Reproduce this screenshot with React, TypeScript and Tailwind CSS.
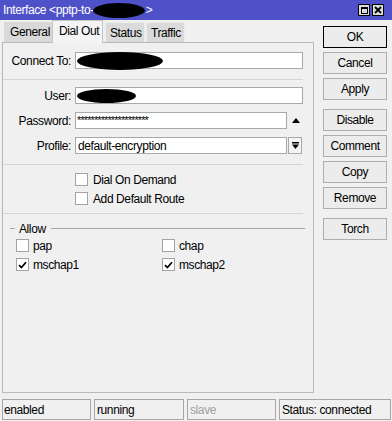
import React from "react";

function Checkbox({ checked }: { checked?: boolean }) {
  return (
    <span className="w-[13px] h-[13px] bg-white border border-[#a3a3a3] flex items-center justify-center shrink-0">
      {checked && (
        <svg width="9" height="8" viewBox="0 0 9 8">
          <path d="M1 4.2 L3.4 6.6 L8 1.2" stroke="#000" strokeWidth="1.7" fill="none" />
        </svg>
      )}
    </span>
  );
}

function Btn({ label, primary, extra }: { label: string; primary?: boolean; extra: string }) {
  return (
    <div
      className={
        "h-[22px] w-[64px] flex items-center justify-center bg-[#ececec] border " +
        (primary ? "border-black " : "border-[#adadad] ") +
        extra
      }
    >
      {label}
    </div>
  );
}

export default function App() {
  return (
    <div className="w-[392px] h-[421px] bg-[#f0f0f0] flex flex-col overflow-hidden font-['Liberation_Sans',Arial,sans-serif] text-[12px] tracking-[-0.4px] text-black leading-none">
      {/* Title bar */}
      <div className="h-[20px] shrink-0 bg-[#4f51c8] flex items-center text-white text-[12px] pl-[3px] pr-[8px]">
        <span>Interface &lt;pptp-to-</span>
        <span className="inline-block w-[52px] h-[15px] bg-black rounded-[50%] ml-[-1px]" />
        <span className="ml-[1px]">&gt;</span>
        <div className="flex-1" />
        <div className="w-[12px] h-[12px] bg-[#dcdcdc] border border-black flex items-center justify-center">
          <span className="w-[7px] h-[7px] border border-black border-t-2" />
        </div>
        <div className="w-[12px] h-[12px] ml-[2px] bg-[#dcdcdc] border border-black flex items-center justify-center">
          <svg width="8" height="8" viewBox="0 0 8 8">
            <path d="M1 1 L7 7 M7 1 L1 7" stroke="#000" strokeWidth="1.8" />
          </svg>
        </div>
      </div>

      {/* Body */}
      <div className="flex h-[379px] shrink-0">
        <div className="ml-[2px] w-[312px] flex flex-col">
          {/* Tabs */}
          <div className="h-[22px] flex items-end pl-[2px]">
            <div className="w-[48px] h-[20px] bg-[#d9d9d9] flex items-center pl-[6px]">General</div>
            <div className="w-[51px] h-[23px] bg-[#f4f4f4] border border-b-0 border-[#c6c6c6] flex items-center pl-[6px] pb-[2px] relative z-10 mb-[-1px]">
              Dial Out
            </div>
            <div className="w-[40px] h-[20px] ml-[2px] bg-[#dadada] border border-b-0 border-[#ececec] flex items-center pl-[4px]">
              Status
            </div>
            <div className="w-[39px] h-[20px] ml-[1px] bg-[#dadada] border border-b-0 border-[#ececec] flex items-center pl-[4px]">
              Traffic
            </div>
          </div>

          {/* Panel */}
          <div className="h-[351px] border border-[#b9b9b9] flex flex-col pt-[9px]">
            <div className="flex items-center h-[17px]">
              <div className="w-[68px] text-right">Connect To:</div>
              <div className="ml-[4px] w-[228px] h-[17px] bg-white border border-[#a9a9a9] relative">
                <span className="absolute left-[1px] top-[-1px] w-[86px] h-[18px] bg-black rounded-[50%]" />
              </div>
            </div>
            <div className="mt-[10px] w-[300px] border-t border-[#d6d6d6]" />

            <div className="mt-[7px] flex items-center h-[17px]">
              <div className="w-[68px] text-right">User:</div>
              <div className="ml-[4px] w-[228px] h-[17px] bg-white border border-[#a9a9a9] relative">
                <span className="absolute left-[1px] top-[1px] w-[59px] h-[14px] bg-black rounded-[50%]" />
              </div>
            </div>

            <div className="mt-[8px] flex items-center h-[17px]">
              <div className="w-[68px] text-right">Password:</div>
              <div className="ml-[4px] w-[212px] h-[17px] bg-white border border-[#a9a9a9] flex items-center pl-[1px] text-[11px] tracking-[-0.9px]">
                *********************
              </div>
              <svg className="ml-[5px]" width="8" height="5" viewBox="0 0 8 5">
                <path d="M0 5 L4 0 L8 5 Z" fill="#000" />
              </svg>
            </div>

            <div className="mt-[8px] flex items-center h-[17px]">
              <div className="w-[68px] text-right">Profile:</div>
              <div className="ml-[4px] w-[212px] h-[17px] bg-white border border-[#a9a9a9] flex items-center pl-[2px]">
                default-encryption
              </div>
              <div className="ml-[1px] w-[14px] h-[17px] bg-[#f4f4f4] border border-[#a9a9a9] flex items-center justify-center">
                <svg width="7" height="7" viewBox="0 0 7 7">
                  <rect x="0" y="0" width="7" height="1.5" fill="#000" />
                  <path d="M0 2.5 L7 2.5 L3.5 7 Z" fill="#000" />
                </svg>
              </div>
            </div>

            <div className="mt-[10px] w-[300px] border-t border-[#d6d6d6]" />

            <div className="mt-[8px] ml-[72px] flex items-center gap-[5px] h-[13px]">
              <Checkbox />
              <span>Dial On Demand</span>
            </div>
            <div className="mt-[6px] ml-[72px] flex items-center gap-[5px] h-[13px]">
              <Checkbox />
              <span>Add Default Route</span>
            </div>

            <div className="mt-[8px] w-[300px] border-t border-[#d6d6d6]" />

            <div className="mt-[8px] ml-[7px] w-[295px] h-[13px] flex items-center">
              <span className="w-[5px] border-t border-[#a6a6a6]" />
              <span className="ml-[4px]">Allow</span>
              <span className="ml-[5px] flex-1 border-t border-[#a6a6a6]" />
            </div>

            <div className="mt-[4px] ml-[13px] flex h-[13px]">
              <div className="w-[146px] flex items-center gap-[4px]">
                <Checkbox />
                <span>pap</span>
              </div>
              <div className="flex items-center gap-[4px]">
                <Checkbox />
                <span>chap</span>
              </div>
            </div>
            <div className="mt-[6px] ml-[13px] flex h-[13px]">
              <div className="w-[146px] flex items-center gap-[4px]">
                <Checkbox checked />
                <span>mschap1</span>
              </div>
              <div className="flex items-center gap-[4px]">
                <Checkbox checked />
                <span>mschap2</span>
              </div>
            </div>
          </div>
        </div>

        {/* Buttons */}
        <div className="ml-[9px] pt-[6px] flex flex-col">
          <Btn label="OK" primary extra="" />
          <Btn label="Cancel" extra="mt-[4px]" />
          <Btn label="Apply" extra="mt-[4px]" />
          <Btn label="Disable" extra="mt-[9px]" />
          <Btn label="Comment" extra="mt-[4px]" />
          <Btn label="Copy" extra="mt-[4px]" />
          <Btn label="Remove" extra="mt-[4px]" />
          <Btn label="Torch" extra="mt-[9px]" />
        </div>
      </div>

      {/* Status bar */}
      <div className="h-[22px] shrink-0 flex pl-[2px] pb-[1px]">
        <div className="w-[89px] h-[21px] border border-[#a6a6a6] flex items-center pl-[1px]">enabled</div>
        <div className="ml-[3px] w-[90px] h-[21px] border border-[#a6a6a6] flex items-center pl-[2px]">running</div>
        <div className="ml-[3px] w-[89px] h-[21px] border border-[#a6a6a6] flex items-center pl-[2px] text-[#a0a0a0]">slave</div>
        <div className="ml-[3px] w-[112px] h-[21px] border border-[#a6a6a6] flex items-center pl-[2px]">Status: connected</div>
      </div>
    </div>
  );
}
